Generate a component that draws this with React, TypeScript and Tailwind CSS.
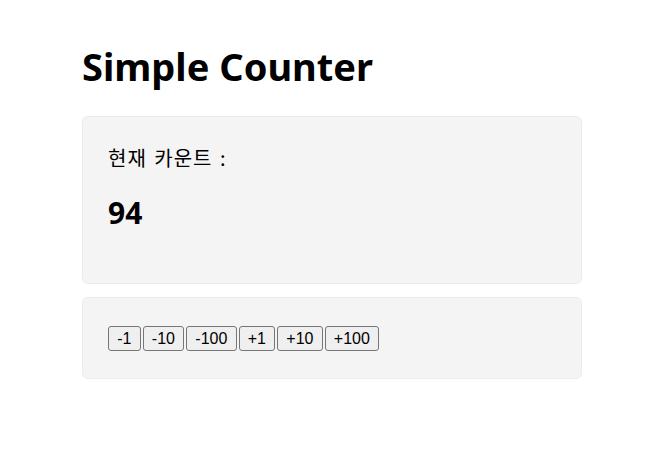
import React, { useState } from 'react';

const steps = [-1, -10, -100, 1, 10, 100];

const App: React.FC = () => {
  const [count, setCount] = useState(94);

  return (
    <div className="min-h-[467px] bg-white font-['Noto_Sans','Noto_Sans_CJK_KR',sans-serif] text-black">
      <div className="ml-[82px] w-[500px] pt-[39px]">
        <h1 className="text-[38px] font-bold leading-[54px] mb-[23px]">Simple Counter</h1>

        <div className="rounded-[6px] border border-[#ececec] bg-[#f4f4f4] px-[25px] pt-[28px] pb-[50px]">
          <p className="text-[20px] leading-[26px] tracking-[1px] [word-spacing:2px] font-['Noto_Sans_CJK_KR',sans-serif]">현재 카운트 :</p>
          <p className="mt-[22px] text-[30px] font-bold leading-[40px]">{count}</p>
        </div>

        <div className="mt-[13px] rounded-[6px] border border-[#ececec] bg-[#f4f4f4] px-[25px] pt-[28px] pb-[27px]">
          <div className="flex gap-[2px]">
            {steps.map((s) => (
              <button
                key={s}
                onClick={() => setCount((c) => c + s)}
                className="h-[25px] rounded-[3px] border border-[#767676] bg-[#efefef] px-[8.2px] font-['Liberation_Sans',Arial,sans-serif] text-[16px] leading-[20px] text-black"
              >
                {s > 0 ? `+${s}` : s}
              </button>
            ))}
          </div>
        </div>
      </div>
    </div>
  );
};

export default App;
